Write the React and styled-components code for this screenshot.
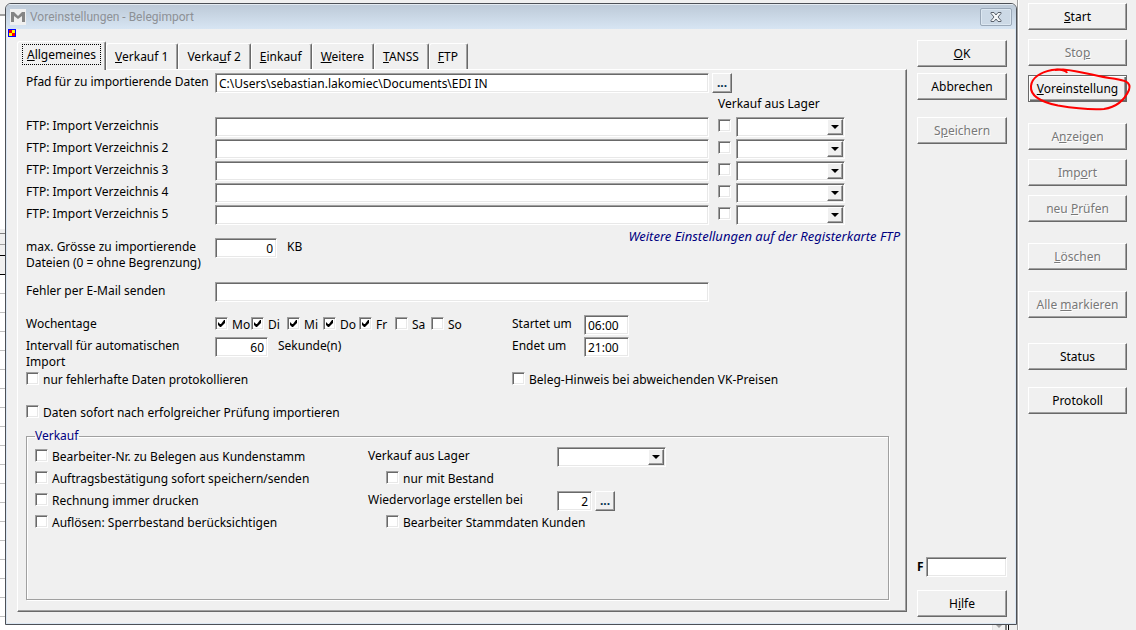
import React, { useState } from "react";
import styled, { createGlobalStyle, css } from "styled-components";

const GlobalStyle = createGlobalStyle`
  * {
    box-sizing: border-box;
  }
  body {
    margin: 0;
    background: #f0f0f0;
    color: #000;
  }
  body, button, input, select {
    font-family: "Noto Sans", "Open Sans", sans-serif;
    font-size: 12px;
    line-height: 16px;
  }
`;

const sunken = css`
  border: 1px solid;
  border-color: #a0a0a0 #fff #fff #a0a0a0;
  box-shadow: inset 1px 1px #696969, inset -1px -1px #e8e8e8;
  background: #fff;
`;

const raised = css`
  border: 1px solid;
  border-color: #fff #696969 #696969 #fff;
  box-shadow: inset -1px -1px #a0a0a0;
  background: #f0f0f0;
`;

const Page = styled.div`
  display: flex;
  min-height: 100vh;
`;

const Strip = styled.div`
  width: 5px;
  display: flex;
  flex-direction: column;
  background: #fff;

  .head {
    height: 16px;
    border-bottom: 2px solid #a0a0a0;
    background: #f0f0f0;
  }
  .list {
    height: 213px;
  }
  .bar {
    height: 16px;
    padding-top: 4px;
    background: #f0f0f0;
    border-bottom: 1px solid #a0a0a0;
  }
  .bar::before {
    content: "";
    display: block;
    height: 1px;
    background: #808080;
  }
  .title {
    height: 30px;
    padding-top: 10px;
    background: #f0f0f0;
    border-bottom: 1px solid #000;
  }
  .title::before {
    content: "";
    display: block;
    height: 1px;
    background: #000;
  }
  .rows {
    flex: 1;
    background: repeating-linear-gradient(#fff 0 18px, #c0c0c0 18px 19px);
  }
`;

const Main = styled.div`
  flex: 1;
  display: flex;
  flex-direction: column;
  padding-top: 3px;
  border-right: 1px solid #a0a0a0;
`;

const Footer = styled.div`
  display: flex;
  justify-content: flex-end;
  height: 5px;
  background: #fff;

  .scroll {
    width: 15px;
    background: #f0f0f0;
    border-left: 1px solid #e3e3e3;
    border-right: 2px solid #808080;
  }
  .scroll svg {
    display: block;
    margin: 0 auto;
  }
  .edge {
    width: 9px;
    margin-left: 1px;
    border-left: 1px solid #000;
    background: #f0f0f0;
  }
`;

const Dialog = styled.section`
  position: relative;
  flex: 1;
  display: flex;
  flex-direction: column;
  border: 1px solid #4c5056;
  border-radius: 6px 6px 0 0;
  background: #f0f0f0;
  box-shadow: inset 0 0 0 1px #dbe7f3;
  overflow: hidden;
`;

const TitleBar = styled.header`
  display: flex;
  align-items: center;
  height: 25px;
  padding: 0 4px;
  gap: 4px;
  border-top: 1px solid #e4ebf2;
  background: linear-gradient(#bdcad8, #d7e5f3);
  color: #8d9196;

  h1 {
    flex: 1;
    margin: 0;
    font-family: Roboto, "Noto Sans", sans-serif;
    font-size: 12px;
    font-weight: normal;
  }
`;

const CloseButton = styled.button`
  display: flex;
  align-items: center;
  justify-content: center;
  width: 32px;
  height: 18px;
  padding: 0;
  border: 1px solid #9aa8b8;
  border-radius: 2px;
  background: #ccd9e6;
  box-shadow: inset 0 0 0 1px #dce7f1;
`;

const Flag = styled.svg`
  position: absolute;
  top: 25px;
  left: 2px;
`;

const Body = styled.div`
  flex: 1;
  display: flex;
  gap: 10px;
  padding: 11px 9px 7px 11px;
`;

const Sheet = styled.div`
  flex: 1;
  display: flex;
  flex-direction: column;
  padding: 1px 0 5px;
`;

const TabList = styled.div`
  display: flex;
  align-items: flex-end;
  height: 28px;
`;

const Tab = styled.button`
  position: relative;
  height: ${(p) => (p.$active ? 29 : 26)}px;
  margin-bottom: ${(p) => (p.$active ? -1 : 0)}px;
  padding: ${(p) => (p.$active ? "0 4px 3px" : "0 8px 0 7px")};
  border: 1px solid;
  border-color: #fff #696969 transparent #fff;
  border-bottom: 0;
  border-radius: 3px 2px 0 0;
  box-shadow: inset -1px 0 #a0a0a0;
  background: #f0f0f0;
  color: #000;

  span {
    display: block;
    padding: ${(p) => (p.$active ? "2px 4px 1px" : "0")};
    border: 1px dotted ${(p) => (p.$active ? "#000" : "transparent")};
  }
`;

const Panel = styled.div`
  flex: 1;
  display: flex;
  flex-direction: column;
  padding: 3px 6px 11px 8px;
  border: 1px solid;
  border-color: #fff #696969 #696969 #fff;
  box-shadow: inset -1px -1px #a0a0a0;
`;

const Row = styled.div`
  display: grid;
  grid-template-columns: 189px minmax(0, 1fr) 191px;
  align-items: start;
  min-height: ${(p) => p.$height || 22}px;
`;

const SplitRow = styled(Row)`
  grid-template-columns: 486px minmax(0, 1fr);
`;

const SizeRow = styled.div`
  display: flex;
  height: 55px;

  > div {
    padding-top: 11px;
  }
`;

const Line = styled.div`
  display: flex;
  align-items: flex-start;
`;

const Extra = styled.div`
  display: flex;
  align-items: flex-start;
  gap: 5px;
  padding-left: 9px;
`;

const Label = styled.label`
  flex: none;
  width: ${(p) => (p.$width ? p.$width + "px" : "auto")};
  padding-top: 1px;
`;

const Unit = styled.span`
  padding: 1px 0 0 10px;
`;

const Text = styled.input`
  ${sunken}
  width: ${(p) => (p.$width ? p.$width + "px" : "100%")};
  height: 20px;
  padding: 0 3px;
  text-align: ${(p) => (p.$right ? "right" : "left")};
  outline: 0;
`;

const DotsButton = styled.button`
  ${raised}
  width: 20px;
  height: 20px;
  margin-left: 3px;
  padding: 0;
  color: #003050;
  font-weight: bold;
`;

const Check = styled.input.attrs({ type: "checkbox" })`
  ${sunken}
  appearance: none;
  display: grid;
  place-content: center;
  flex: none;
  width: 13px;
  height: 13px;
  margin: 2px 0 0;

  &:checked::before {
    content: "";
    width: 7px;
    height: 7px;
    background: #000;
    clip-path: polygon(0 2px, 0 5px, 2px 7px, 3px 7px, 7px 3px, 7px 0, 6px 0, 3px 4px, 2px 4px);
  }
`;

const CheckLabel = styled.label`
  display: flex;
  align-items: flex-start;
  width: ${(p) => (p.$width ? p.$width + "px" : "auto")};
  padding-left: ${(p) => p.$indent || 0}px;
  white-space: nowrap;

  span {
    padding: 2px 0 0 4px;
  }
`;

const SelectBox = styled.span`
  position: relative;
  display: block;
  width: 109px;

  select {
    ${sunken}
    appearance: none;
    display: block;
    width: 100%;
    height: 20px;
    padding: 0 20px 0 3px;
    border-radius: 0;
  }
  span {
    ${raised}
    position: absolute;
    top: 2px;
    right: 2px;
    width: 16px;
    height: 16px;
    display: grid;
    place-content: center;
    pointer-events: none;
  }
  span::before {
    content: "";
    border: 4px solid transparent;
    border-top-color: #000;
    border-bottom: 0;
  }
`;

const Note = styled.p`
  margin: 0 0 0 auto;
  padding-top: 1px;
  color: #000080;
  font-size: 13px;
  font-style: italic;
`;

const Group = styled.fieldset`
  flex: 1;
  display: grid;
  grid-template-columns: 333px 1fr;
  align-content: start;
  min-height: 160px;
  margin: 0 11px 0 0;
  padding: 3px 8px;
  border: 1px solid #a0a0a0;
  box-shadow: 1px 1px #fff, inset 1px 1px #fff;

  legend {
    padding: 0 1px 0 0;
    color: #000080;
  }
`;

const GroupRow = styled.div`
  display: flex;
  align-items: flex-start;
  height: 22px;
`;

const SideColumn = styled.div`
  display: flex;
  flex-direction: column;
  width: 90px;
`;

const Button = styled.button`
  ${raised}
  width: 100%;
  height: 27px;
  margin-top: ${(p) => p.$gap || 0}px;
  padding: 0;
  color: #000;
  white-space: nowrap;

  &:disabled {
    color: #787878;
    text-shadow: 1px 1px #fff;
  }
  ${(p) =>
    p.$focused &&
    css`
      border-color: #696969;
      box-shadow: inset 1px 1px #fff, inset -1px -1px #696969, inset -2px -2px #a0a0a0;
    `}
`;

const Search = styled.label`
  display: flex;
  align-items: center;
  gap: 2px;
  margin: auto 0 13px;
  font-weight: bold;
`;

const Toolbar = styled.aside`
  width: 118px;
  padding: 3px 9px 0;
  border-left: 1px solid #fff;
`;

const Marked = styled.div`
  position: relative;
  margin-top: ${(p) => p.$gap}px;

  svg {
    position: absolute;
    top: -7px;
    left: 0;
    overflow: visible;
    pointer-events: none;
  }
`;

// "&" marks the access key of a caption
const Caption = ({ text }) => {
  const [before, after] = text.split("&");
  if (after === undefined) return before;
  return (
    <>
      {before}
      <u>{after[0]}</u>
      {after.slice(1)}
    </>
  );
};

const CheckField = ({ text, ...rest }) => (
  <CheckLabel {...rest}>
    <Check />
    <span>{text}</span>
  </CheckLabel>
);

const Select = (props) => (
  <SelectBox>
    <select {...props}>
      <option></option>
    </select>
    <span />
  </SelectBox>
);

const tabs = ["&Allgemeines", "&Verkauf 1", "Verka&uf 2", "&Einkauf", "&Weitere", "&TANSS", "&FTP"];

const days = ["Mo", "Di", "Mi", "Do", "Fr", "Sa", "So"];

const tools = [
  { text: "&Start" },
  { text: "Sto&p", gap: 9, disabled: true },
  { text: "&Voreinstellung", gap: 9, focused: true },
  { text: "A&nzeigen", gap: 21, disabled: true },
  { text: "Imp&ort", gap: 9, disabled: true },
  { text: "neu &Prüfen", gap: 9, disabled: true },
  { text: "&Löschen", gap: 21, disabled: true },
  { text: "Alle &markieren", gap: 21, disabled: true },
  { text: "Status", gap: 25 },
  { text: "Protokoll", gap: 17 },
];

const General = () => (
  <Panel role="tabpanel">
    <Row>
      <Label htmlFor="path">Pfad für zu importierende Daten</Label>
      <Text id="path" defaultValue="C:\Users\sebastian.lakomiec\Documents\EDI IN" />
      <DotsButton aria-label="Pfad wählen">...</DotsButton>
    </Row>
    <Row>
      <span />
      <span />
      <Extra>
        <Label as="span">Verkauf aus Lager</Label>
      </Extra>
    </Row>
    {[1, 2, 3, 4, 5].map((n) => (
      <Row key={n}>
        <Label htmlFor={"ftp" + n}>FTP: Import Verzeichnis{n > 1 ? " " + n : ""}</Label>
        <Text id={"ftp" + n} />
        <Extra>
          <Check aria-label="Verkauf aus Lager" />
          <Select aria-label="Lager" />
        </Extra>
      </Row>
    ))}
    <SizeRow>
      <Line>
        <Label htmlFor="size" $width={189}>
          max. Grösse zu importierende
          <br />
          Dateien (0 = ohne Begrenzung)
        </Label>
        <Text id="size" $width={62} $right defaultValue="0" />
        <Unit>KB</Unit>
      </Line>
      <Note>Weitere Einstellungen auf der Registerkarte FTP</Note>
    </SizeRow>
    <Row $height={33}>
      <Label htmlFor="mail">Fehler per E-Mail senden</Label>
      <Text id="mail" />
    </Row>
    <SplitRow>
      <Line>
        <Label as="span" $width={189}>Wochentage</Label>
        {days.map((day, i) => (
          <CheckLabel key={day} $width={36}>
            <Check defaultChecked={i < 5} />
            <span>{day}</span>
          </CheckLabel>
        ))}
      </Line>
      <Line>
        <Label htmlFor="start" $width={72}>Startet um</Label>
        <Text id="start" $width={45} defaultValue="06:00" />
      </Line>
    </SplitRow>
    <SplitRow $height={33}>
      <Line>
        <Label htmlFor="interval" $width={189}>
          Intervall für automatischen
          <br />
          Import
        </Label>
        <Text id="interval" $width={53} $right defaultValue="60" />
        <Unit>Sekunde(n)</Unit>
      </Line>
      <Line>
        <Label htmlFor="end" $width={72}>Endet um</Label>
        <Text id="end" $width={45} defaultValue="21:00" />
      </Line>
    </SplitRow>
    <SplitRow $height={33}>
      <CheckField text="nur fehlerhafte Daten protokollieren" />
      <CheckField text="Beleg-Hinweis bei abweichenden VK-Preisen" />
    </SplitRow>
    <SplitRow $height={25}>
      <CheckField text="Daten sofort nach erfolgreicher Prüfung importieren" />
    </SplitRow>
    <Group>
      <legend>Verkauf</legend>
      <div>
        <GroupRow><CheckField text="Bearbeiter-Nr. zu Belegen aus Kundenstamm" /></GroupRow>
        <GroupRow><CheckField text="Auftragsbestätigung sofort speichern/senden" /></GroupRow>
        <GroupRow><CheckField text="Rechnung immer drucken" /></GroupRow>
        <GroupRow><CheckField text="Auflösen: Sperrbestand berücksichtigen" /></GroupRow>
      </div>
      <div>
        <GroupRow>
          <Label htmlFor="store" $width={189}>Verkauf aus Lager</Label>
          <Select id="store" />
        </GroupRow>
        <GroupRow><CheckField $indent={18} text="nur mit Bestand" /></GroupRow>
        <GroupRow>
          <Label htmlFor="resubmit" $width={189}>Wiedervorlage erstellen bei</Label>
          <Text id="resubmit" $width={35} $right defaultValue="2" />
          <DotsButton aria-label="Auswählen">...</DotsButton>
        </GroupRow>
        <GroupRow><CheckField $indent={18} text="Bearbeiter Stammdaten Kunden" /></GroupRow>
      </div>
    </Group>
  </Panel>
);

const App = () => {
  const [active, setActive] = useState(0);

  return (
    <Page>
      <GlobalStyle />
      <Strip>
        <div className="head" />
        <div className="list" />
        <div className="bar" />
        <div className="title" />
        <div className="rows" />
      </Strip>
      <Main>
        <Dialog>
          <TitleBar>
            <svg width="16" height="16" viewBox="0 0 16 16">
              <path d="M0 0h16v16H0z" fill="#f0f0f0" />
              <path d="M1 3h3l4 4 4-4h3v10h-3V7L8 10 4 7v6H1z" fill="#858585" />
            </svg>
            <h1>Voreinstellungen - Belegimport</h1>
            <CloseButton aria-label="Schließen">
              <svg width="12" height="10" viewBox="0 0 12 10">
                <path
                  d="M1 .5h3l2 2.5 2-2.5h3v1L8 5l3 3.500v1H8L6 7 4 9.500H1v-1L4 5 1 1.500z"
                  fill="#f4f6f8"
                  stroke="#59616c"
                />
              </svg>
            </CloseButton>
          </TitleBar>
          <Flag width="8" height="8" viewBox="0 0 8 8">
            <path d="M0 0h8v8H0z" fill="#0000ff" />
            <path d="M1 1h6v6H1z" fill="#ffff00" />
            <path d="M1 1h3v3H1zM4 4h3v3H4z" fill="#ff0000" />
          </Flag>
          <Body>
            <Sheet>
              <TabList role="tablist">
                {tabs.map((text, i) => (
                  <Tab
                    key={text}
                    role="tab"
                    aria-selected={i === active}
                    $active={i === active}
                    onClick={() => setActive(i)}
                  >
                    <span><Caption text={text} /></span>
                  </Tab>
                ))}
              </TabList>
              <General />
            </Sheet>
            <SideColumn>
              <Button><Caption text="&OK" /></Button>
              <Button $gap={6}>Abbrechen</Button>
              <Button $gap={17} disabled><Caption text="S&peichern" /></Button>
              <Search>
                F
                <Text />
              </Search>
              <Button><Caption text="H&ilfe" /></Button>
            </SideColumn>
          </Body>
        </Dialog>
        <Footer>
          <div className="scroll">
            <svg width="6" height="3" viewBox="0 0 6 3">
              <path d="M0 0h6L3 3z" fill="#a0a0a0" />
            </svg>
          </div>
          <div className="edge" />
        </Footer>
      </Main>
      <Toolbar>
        {tools.map(({ text, gap, disabled, focused }) => {
          if (!focused) {
            return (
              <Button key={text} $gap={gap} disabled={disabled}>
                <Caption text={text} />
              </Button>
            );
          }
          return (
            <Marked key={text} $gap={gap}>
              <Button $focused>
                <Caption text={text} />
              </Button>
              <svg width="105" height="44" viewBox="0 0 105 44">
                <path
                  d="M39 5C38 2 31 1 24 2C14 4 4 9 3 18C2 28 13 34 30 37.500C45 40 62 42 76 41C89 39 97 31 101 22C104 13 94 12 85 10.500C70 9 54 3 35 1.500L27 2"
                  fill="none"
                  stroke="#ff0000"
                  strokeWidth="2"
                />
              </svg>
            </Marked>
          );
        })}
      </Toolbar>
    </Page>
  );
};

export default App;
